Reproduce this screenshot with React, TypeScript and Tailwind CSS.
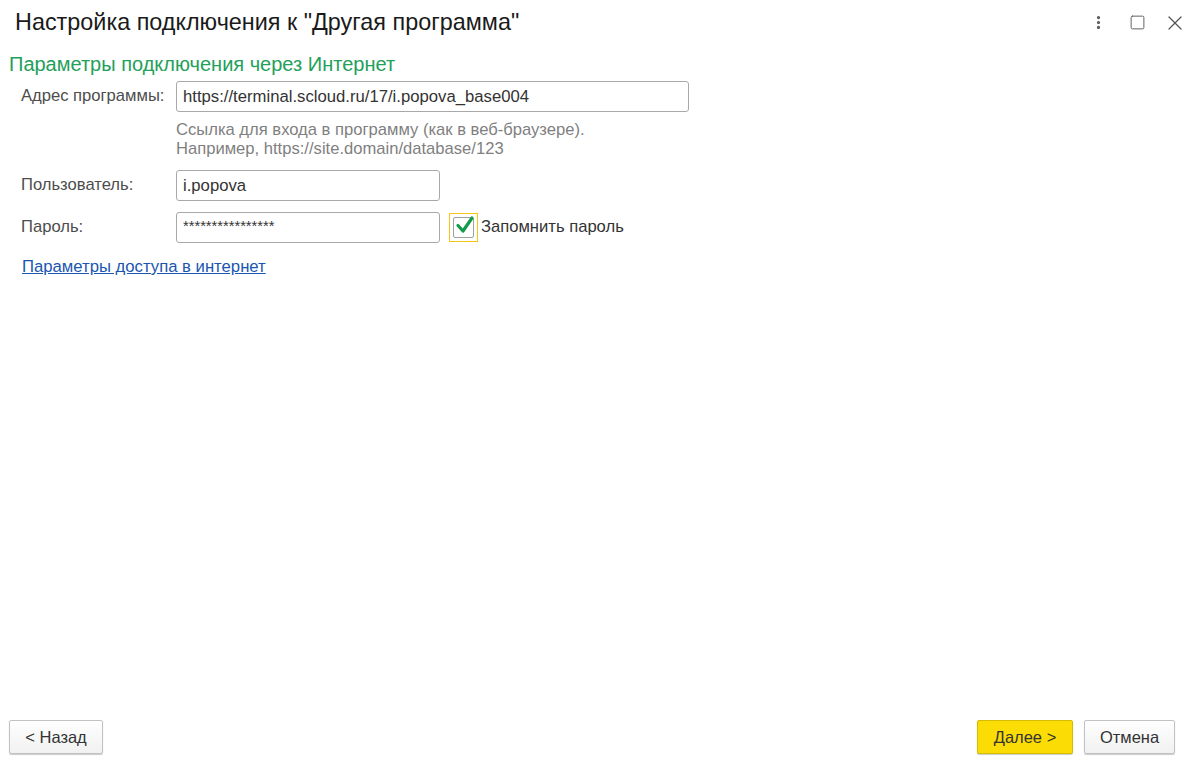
import { MoreVertical, Square, X } from 'lucide-react';

function Field({ label, children }: { label: string; children: React.ReactNode }) {
    return (
        <div className="flex items-center">
            <div className="w-[167px] pl-[12px] text-[16.6px] text-[#4d4d4d]">{label}</div>
            {children}
        </div>
    );
}

function Input({ value, className }: { value: string; className: string }) {
    return (
        <div
            className={`h-[31px] border border-[#a9a9a9] rounded-[3px] bg-white flex items-center px-[6px] text-[16.7px] text-[#333] ${className}`}
        >
            {value}
        </div>
    );
}

function Button({ label, primary, className }: { label: string; primary?: boolean; className: string }) {
    return (
        <button
            className={`h-[34px] rounded-[2px] text-[16.5px] flex items-center justify-center shadow-[0_1px_1px_rgba(0,0,0,0.2)] ${
                primary
                    ? 'bg-[#fbdd05] border border-[#d6bb00] text-[#333]'
                    : 'bg-gradient-to-b from-white to-[#f1f1f1] border border-[#c2c2c2] text-[#333]'
            } ${className}`}
        >
            {label}
        </button>
    );
}

export default function App() {
    return (
        <div className="h-[763px] w-[1191px] bg-white flex flex-col font-['Liberation_Sans',Arial,sans-serif] overflow-hidden">
            <div className="h-[45px] flex items-center justify-between pl-[15px] pr-[4px]">
                <h1 className="text-[23.4px] text-[#1a1a1a]">Настройка подключения к "Другая программа"</h1>
                <div className="flex items-center text-[#555]">
                    <MoreVertical size={17} strokeWidth={2.5} />
                    <Square size={17} strokeWidth={1.3} className="ml-[22px]" />
                    <X size={24} strokeWidth={1.2} className="ml-[17px]" />
                </div>
            </div>

            <div className="flex-1 flex flex-col pl-[9px]">
                <h2 className="text-[20px] text-[#23a05a] mt-[7px] leading-[24px]">Параметры подключения через Интернет</h2>

                <div className="mt-[5px]">
                    <Field label="Адрес программы:">
                        <Input value="https://terminal.scloud.ru/17/i.popova_base004" className="w-[513px]" />
                    </Field>
                    <div className="pl-[167px] mt-[8px] text-[16.6px] leading-[19px] text-[#7f7f7f]">
                        <div>Ссылка для входа в программу (как в веб-браузере).</div>
                        <div>Например, https://site.domain/database/123</div>
                    </div>
                </div>

                <div className="mt-[12px]">
                    <Field label="Пользователь:">
                        <Input value="i.popova" className="w-[264px]" />
                    </Field>
                </div>

                <div className="mt-[11px]">
                    <Field label="Пароль:">
                        <Input value="****************" className="w-[264px] items-start pt-[2px] !text-[14.7px]" />
                        <div className="ml-[9px] w-[29px] h-[29px] border border-[#f5c518] flex items-center justify-center">
                            <div className="w-[21px] h-[21px] border border-[#a0a0a0] rounded-[2px] bg-white relative">
                                <svg viewBox="0 0 20 20" className="absolute left-[1px] -top-[3px] w-[20px] h-[20px]">
                                    <path d="M3 10.5 L8 16 L17 3" fill="none" stroke="#149b49" strokeWidth="3.2" strokeLinecap="round" strokeLinejoin="round" />
                                </svg>
                            </div>
                        </div>
                        <span className="ml-[3px] text-[16.6px] text-[#333]">Запомнить пароль</span>
                    </Field>
                </div>

                <a href="#" className="mt-[11px] ml-[13px] self-start text-[16.7px] text-[#1a56b0] underline">
                    Параметры доступа в интернет
                </a>

                <div className="mt-auto mb-[9px] flex items-center pr-[16px]">
                    <Button label="< Назад" className="w-[94px]" />
                    <Button label="Далее >" primary className="ml-auto w-[96px]" />
                    <Button label="Отмена" className="ml-[11px] w-[91px]" />
                </div>
            </div>
        </div>
    );
}
